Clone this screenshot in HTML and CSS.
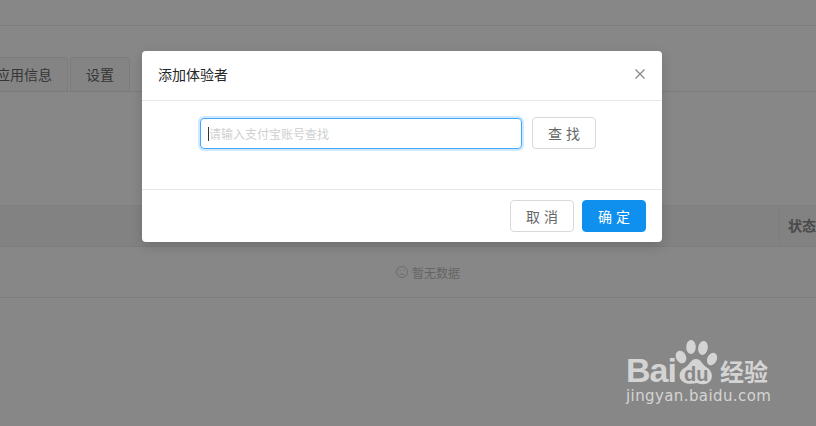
FILE: index.html
```html
<!DOCTYPE html>
<html lang="en">
<head>
    <meta charset="UTF-8" />
    <title>添加体验者</title>
    <link rel="stylesheet" href="styles.css">
</head>
<body>
    <div class="page">
        <div class="topbar"></div>

        <div class="tabs">
            <div class="tab tab-first">应用信息</div>
            <div class="tab">设置</div>
        </div>

        <div class="table-head">
            <div class="status-col">状态</div>
        </div>
        <div class="table-empty">
            <svg class="empty-icon" viewBox="0 0 12 12" width="12" height="12">
                <circle cx="6" cy="6" r="5.5" fill="none" stroke="currentColor" stroke-width="0.8" />
                <circle cx="4" cy="4.6" r="0.6" fill="currentColor" />
                <circle cx="8" cy="4.6" r="0.6" fill="currentColor" />
                <path d="M3.6 9 Q6 6.2 8.4 9" fill="none" stroke="currentColor" stroke-width="0.8" />
            </svg>
            <span>暂无数据</span>
        </div>
    </div>

    <div class="mask"></div>

    <div class="modal">
        <div class="modal-header">
            <span class="modal-title">添加体验者</span>
            <svg class="modal-close" viewBox="0 0 10 10" width="10" height="10">
                <path d="M0.5 0.5 L9.5 9.5 M9.5 0.5 L0.5 9.5" stroke="#8c8c8c" stroke-width="1.4" fill="none" />
            </svg>
        </div>
        <div class="modal-body">
            <div class="search-input"><span class="caret"></span><span class="placeholder">请输入支付宝账号查找</span></div>
            <button class="btn btn-search">查 找</button>
        </div>
        <div class="modal-footer">
            <button class="btn">取 消</button>
            <button class="btn btn-primary">确 定</button>
        </div>
    </div>

    <!-- Watermark -->
    <div class="watermark">
        <div class="wm-logo">
            <span class="wm-bai">Bai</span>
            <svg class="wm-paw" viewBox="0 0 46 46" width="46" height="46">
                <ellipse cx="6" cy="17" rx="5" ry="6.5" transform="rotate(-25 6 17)" />
                <ellipse cx="16" cy="7" rx="4.8" ry="7" />
                <ellipse cx="28" cy="8" rx="4.8" ry="7" transform="rotate(10 28 8)" />
                <ellipse cx="37" cy="19" rx="4.8" ry="6.5" transform="rotate(25 37 19)" />
                <path d="M21 19 C26 19 27 24 31 27 C37 30 38 36 36 40 C33 45 27 45 22 43 C17 44 10 45 6 40 C3 35 5 30 11 27 C15 24 16 19 21 19 Z" />
            </svg>
            <span class="wm-du">du</span>
            <span class="wm-cn">经验</span>
        </div>
        <div class="wm-url">jingyan.baidu.com</div>
    </div>
</body>
</html>
```

FILE: styles.css
```css
body {
    margin: 0;
    width: 816px;
    height: 426px;
    overflow: hidden;
    background-color: #fff;
    font-family: "Liberation Sans", "Noto Sans CJK SC", sans-serif;
    font-size: 14px;
    position: relative;
}

/* Page behind the dialog */
.page {
    height: 426px;
    overflow: hidden;
}

.topbar {
    height: 25px;
    border-bottom: 1px solid #e8e8e8;
}

.tabs {
    display: flex;
    gap: 2px;
    height: 34px;
    margin-top: 31px;
    margin-left: -20px;
    border-bottom: 1px solid #e8e8e8;
}

.tab {
    width: 58px;
    border: 1px solid #e8e8e8;
    border-bottom: none;
    border-radius: 4px 4px 0 0;
    background-color: #fafafa;
    color: #666;
    font-size: 14px;
    line-height: 34px;
    text-align: center;
}

.tab-first {
    width: 86px;
}

.table-head {
    display: flex;
    justify-content: flex-end;
    height: 40px;
    margin-top: 113px;
    border-top: 1px solid #f0f0f0;
    background-color: #f5f5f5;
    border-bottom: 1px solid #ececec;
}

.status-col {
    width: 28px;
    padding-left: 8px;
    border-left: 1px solid #ececec;
    color: #8c8c8c;
    font-size: 14px;
    font-weight: bold;
    line-height: 40px;
    white-space: nowrap;
}

.table-empty {
    display: flex;
    align-items: center;
    justify-content: center;
    gap: 4px;
    height: 50px;
    padding-left: 40px;
    border-bottom: 1px solid #e8e8e8;
    color: #bfbfbf;
    font-size: 12px;
}

/* Dialog */
.mask {
    position: absolute;
    inset: 0;
    background-color: rgba(0, 0, 0, 0.47);
}

.modal {
    position: absolute;
    left: 142px;
    top: 51px;
    width: 520px;
    height: 191px;
    background-color: #fff;
    border-radius: 4px;
    box-shadow: 0 4px 12px rgba(0, 0, 0, 0.15);
    display: flex;
    flex-direction: column;
}

.modal-header {
    height: 49px;
    padding: 0 17px 0 16px;
    border-bottom: 1px solid #e8e8e8;
    display: flex;
    align-items: center;
    justify-content: space-between;
}

.modal-title {
    margin-bottom: 4px;
    color: #262626;
    font-size: 14px;
}

.modal-close {
    margin-bottom: 3px;
}

.modal-body {
    flex: 1;
    display: flex;
    align-items: flex-start;
    padding: 16px 0 0 58px;
    gap: 10px;
}

.search-input {
    width: 313px;
    height: 29px;
    margin-top: 1px;
    padding-left: 7px;
    border: 1px solid #40a9ff;
    border-radius: 4px;
    box-shadow: 0 0 0 2px rgba(24, 144, 255, 0.2);
    display: flex;
    align-items: center;
}

.caret {
    width: 1px;
    height: 14px;
    background-color: #333;
}

.placeholder {
    color: #cfcfcf;
    font-size: 12px;
}

.btn {
    width: 64px;
    height: 32px;
    padding: 0;
    border: 1px solid #d9d9d9;
    border-radius: 4px;
    background-color: #fff;
    color: #666;
    font-family: inherit;
    font-size: 14px;
}

.modal-footer {
    height: 53px;
    border-top: 1px solid #e8e8e8;
    display: flex;
    justify-content: flex-end;
    align-items: flex-start;
    gap: 8px;
    padding: 10px 16px 0 0;
    box-sizing: border-box;
}

.btn-primary {
    background-color: #1090ee;
    border-color: #1090ee;
    color: #fff;
}

/* Watermark */
.watermark {
    position: absolute;
    left: 626px;
    top: 338px;
    color: #d4d4d4;
}

.wm-logo {
    position: relative;
    height: 48px;
}

.wm-bai {
    position: absolute;
    left: 0;
    top: 14px;
    font-size: 34px;
    font-weight: bold;
    line-height: 36px;
    letter-spacing: -1px;
}

.wm-paw {
    position: absolute;
    left: 49px;
    top: 2px;
    fill: #d4d4d4;
}

.wm-du {
    position: absolute;
    left: 58px;
    top: 24px;
    color: #888;
    font-size: 20px;
    font-weight: bold;
    line-height: 24px;
}

.wm-cn {
    position: absolute;
    left: 94px;
    top: 21px;
    font-size: 24px;
    font-weight: bold;
    line-height: 28px;
}

.wm-url {
    margin-top: 1px;
    font-family: "DejaVu Sans", sans-serif;
    font-size: 15px;
    letter-spacing: 0.4px;
    white-space: nowrap;
}
```
